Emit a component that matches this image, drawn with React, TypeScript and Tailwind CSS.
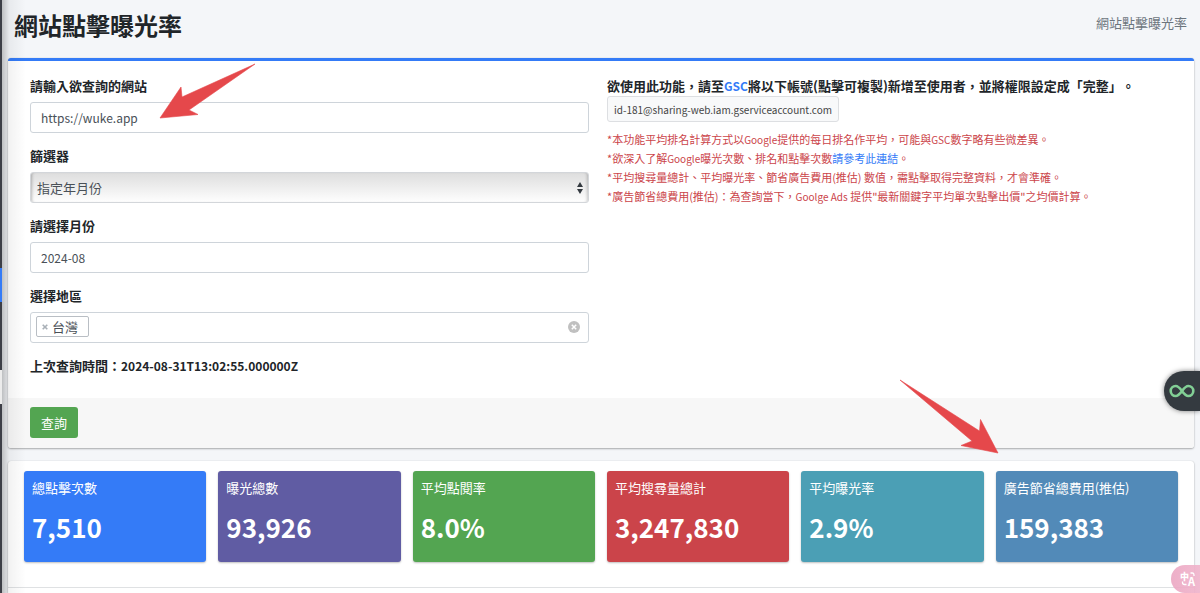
import type { ReactNode } from "react";

const stats = [
  { label: "總點擊次數", value: "7,510", color: "bg-[#347bf7]" },
  { label: "曝光總數", value: "93,926", color: "bg-[#605ca3]" },
  { label: "平均點閱率", value: "8.0%", color: "bg-[#53a551]" },
  { label: "平均搜尋量總計", value: "3,247,830", color: "bg-[#cb444a]" },
  { label: "平均曝光率", value: "2.9%", color: "bg-[#4b9fb5]" },
  { label: "廣告節省總費用(推估)", value: "159,383", color: "bg-[#528ab8]" },
];

const control =
  "block h-[31px] w-full rounded-[3px] border border-[#ced4da] bg-white px-[10px] text-[12px] text-[#495057] outline-none";

function Field({ id, label, children }: { id: string; label: string; children: ReactNode }) {
  return (
    <div className="mb-[13px]">
      <label htmlFor={id} className="mb-1.5 block text-[13px] leading-5 font-bold">
        {label}
      </label>
      {children}
    </div>
  );
}

function Arrow({ points, box, className }: { points: string; box: string; className: string }) {
  return (
    <svg viewBox={box} className={`pointer-events-none absolute ${className}`} aria-hidden="true">
      <polygon points={points} fill="#e5484b" stroke="#e5484b" strokeWidth="0.6" strokeLinejoin="round" />
    </svg>
  );
}

export default function App() {
  return (
    <div className="relative flex h-screen overflow-hidden bg-[#f4f6f9] font-['Noto_Sans_CJK_TC',sans-serif] text-[#212529] [text-spacing-trim:space-all]">
      {/* Sidebar edge */}
      <aside className="flex w-0.5 shrink-0 flex-col bg-[#3d3f47]">
        <div className="mt-[268px] h-[34px] bg-[#347bf7]" />
        <div className="mt-[68px] h-[34px] bg-[#ececec]" />
      </aside>
      <div className="pointer-events-none absolute inset-y-0 left-0.5 z-10 w-6 bg-linear-to-r from-black/22 via-black/5 via-30% to-transparent" />

      <main className="flex min-w-0 flex-1 flex-col pr-1.5 pl-1.5">
        {/* Page header */}
        <header className="flex h-[58px] shrink-0 items-start justify-between pr-[7px] pl-1.5">
          <h1 className="pt-2 text-[24px] leading-[34px] font-bold">網站點擊曝光率</h1>
          <span className="pt-[13px] text-[13px] leading-5 text-[#6c757d]">網站點擊曝光率</span>
        </header>

        {/* Search form */}
        <form
          className="shrink-0 rounded-[3px] border-t-[3px] border-[#347bf7] bg-white shadow-[0_0_1px_rgba(0,0,0,.2),0_1px_2px_rgba(0,0,0,.3)]"
          onSubmit={(e) => e.preventDefault()}
        >
          <div className="grid grid-cols-2 gap-[18px] pt-[15px] pr-7 pb-[22px] pl-[22px]">
            <div>
              <Field id="site" label="請輸入欲查詢的網站">
                <input id="site" type="text" defaultValue="https://wuke.app" className={control} />
              </Field>
              <Field id="filter" label="篩選器">
                <div className="relative">
                  <select
                    id="filter"
                    className="block h-[31px] w-full appearance-none rounded-[3px] border border-[#d3d6da] bg-linear-to-b from-[#dedede] to-[#fefefe] px-1.5 text-[13px] text-[#495057] shadow-[inset_3px_0_3px_-2px_rgba(0,0,0,.25),inset_-3px_0_3px_-2px_rgba(0,0,0,.2)] outline-none"
                  >
                    <option>指定年月份</option>
                  </select>
                  <svg viewBox="0 0 6 12" className="pointer-events-none absolute top-[10px] right-1.5 h-3 w-1.5" aria-hidden="true">
                    <path d="M3 0 6 5H0ZM3 12 0 7H6Z" fill="#343a40" />
                  </svg>
                </div>
              </Field>
              <Field id="month" label="請選擇月份">
                <input id="month" type="text" defaultValue="2024-08" className={control} />
              </Field>
              <Field id="region" label="選擇地區">
                <div className="flex h-[31px] items-center rounded-[3px] border border-[#ced4da] pr-2 pb-0.5 pl-[5px]">
                  <span className="flex h-[21px] items-center rounded-[2px] border border-[#b9bec4] pr-2.5 pl-1 text-[13px] text-[#495057]">
                    <button type="button" aria-label="移除台灣" className="mr-[3px] flex w-2 justify-center">
                      <svg viewBox="0 0 6 6" className="size-1.5" aria-hidden="true">
                        <path d="M0.7 0.7 5.3 5.3M5.3 0.7 0.7 5.3" stroke="#a9b0b7" strokeWidth="1.6" />
                      </svg>
                    </button>
                    台灣
                  </span>
                  <input id="region" type="text" className="h-5 min-w-0 flex-1 outline-none" />
                  <button type="button" aria-label="清除">
                    <svg viewBox="0 0 12 12" className="size-3" aria-hidden="true">
                      <circle cx="6" cy="6" r="6" fill="#c0c0c0" />
                      <path d="M3.8 3.8 8.2 8.2M8.2 3.8 3.8 8.2" stroke="#fff" strokeWidth="1.5" />
                    </svg>
                  </button>
                </div>
              </Field>
              <p className="text-[13px] leading-5 font-bold">
                上次查詢時間：<span className="text-[12px]">2024-08-31T13:02:55.000000Z</span>
              </p>
            </div>

            <div className="whitespace-nowrap">
              <p className="text-[13px] leading-5 font-bold">
                欲使用此功能，請至
                <a href="#gsc" className="text-[12px] text-[#347bf7]">GSC</a>
                將以下帳號(點擊可複製)新增至使用者，並將權限設定成「完整」。
              </p>
              <button
                type="button"
                className="block h-[26px] rounded-[3px] border border-[#dddfe2] bg-[#f8f9fa] px-1.5 text-[10px] text-[#444]"
              >
                id-181@sharing-web.iam.gserviceaccount.com
              </button>
              <div className="mt-2 text-[11px] leading-[19px] text-[#cb444a]">
                <p>
                  *本功能平均排名計算方式以<span className="text-[10px]">Google</span>
                  提供的每日排名作平均，可能與<span className="text-[10px]">GSC</span>數字略有些微差異。
                </p>
                <p>
                  *欲深入了解<span className="text-[10px]">Google</span>曝光次數、排名和點擊次數
                  <a href="#docs" className="text-[#347bf7]">請參考此連結</a>。
                </p>
                <p>*平均搜尋量總計、平均曝光率、節省廣告費用(推估) 數值，需點擊取得完整資料，才會準確。</p>
                <p>
                  *廣告節省總費用(推估)：為查詢當下，<span className="text-[10px]">Goolge Ads</span>{" "}
                  提供"最新關鍵字平均單次點擊出價"之均價計算。
                </p>
              </div>
            </div>
          </div>
          <div className="rounded-b-[3px] bg-[#f7f7f7] px-[22px] pt-[9px] pb-2.5">
            <button type="submit" className="block h-[31px] rounded-[3px] bg-[#53a551] px-[11px] text-[13px] text-white">
              查詢
            </button>
          </div>
        </form>

        {/* Statistics */}
        <section className="mt-[13px] flex-1 rounded-t-[3px] bg-white shadow-[0_0_1px_rgba(0,0,0,.2),0_1px_2px_rgba(0,0,0,.3)]">
          <div className="grid grid-cols-6 gap-3 border-b border-[#dfe1e3] px-4 pt-2.5 pb-[25px]">
            {stats.map((s) => (
              <div
                key={s.label}
                className={`h-[91px] rounded-[3px] px-2 pt-[7px] whitespace-nowrap text-white shadow-[0_1px_2px_rgba(0,0,0,.25)] ${s.color}`}
              >
                <p className="text-[13px] leading-5">{s.label}</p>
                <p className="mt-2.5 text-[26px] leading-[38px] font-bold">{s.value}</p>
              </div>
            ))}
          </div>
        </section>
      </main>

      {/* Annotation arrows */}
      <Arrow
        className="top-[60px] left-[156px] h-[62px] w-[104px]"
        box="156 60 104 62"
        points="160,118 181,87 182,97 255,64 189,110 198,114.500"
      />
      <Arrow
        className="top-[376px] left-[896px] h-[80px] w-[106px]"
        box="896 376 106 80"
        points="900,380 979.500,431 980.500,419.500 998,453 961,445.500 972,441"
      />

      {/* Floating extension buttons */}
      <button
        type="button"
        aria-label="開啟工具"
        className="absolute top-[371px] right-0 flex h-10 w-9 items-center justify-center rounded-l-full bg-[#343a40] shadow-[0_0_5px_rgba(0,0,0,.5)]"
      >
        <svg viewBox="0 0 26 14" className="h-3.5 w-[26px]" fill="none" stroke="#82cf95" strokeWidth="2.6" aria-hidden="true">
          <path d="M13 7C10.500 3.600 9 2 6.700 2A5 5 0 0 0 6.700 12C9 12 10.500 10.400 13 7S17 2 19.300 2A5 5 0 0 1 19.300 12C17 12 15.500 10.400 13 7Z" />
        </svg>
      </button>
      <button
        type="button"
        aria-label="翻譯"
        className="absolute top-[565px] right-0 flex h-7 w-[29px] items-center justify-end rounded-l-full bg-linear-to-r from-[#eba6c2]/90 to-[#f0b3cb]/90 pr-1"
      >
        <svg viewBox="0 0 16 16" className="size-4" fill="#fff" aria-hidden="true">
          <text x="0" y="8.500" fontSize="9" fontWeight="900">中</text>
          <text x="8" y="14.500" fontSize="11" fontWeight="700">A</text>
          <path d="M10.500 2H12.500Q14 2 14 4V5M2.500 10.500V11.500Q2.500 13.500 4.500 13.500H6.500" fill="none" stroke="#fff" strokeWidth="1.3" />
        </svg>
      </button>
    </div>
  );
}
